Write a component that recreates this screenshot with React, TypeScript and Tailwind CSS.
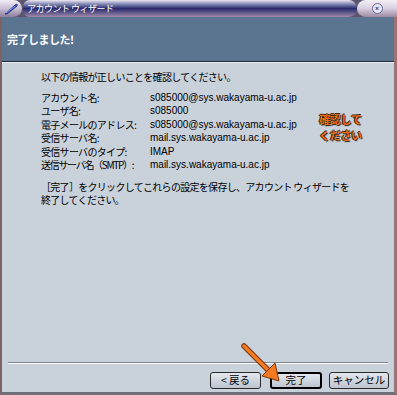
import React from "react";

const rows: [string, string][] = [
  ["アカウント名:", "s085000@sys.wakayama-u.ac.jp"],
  ["ユーザ名:", "s085000"],
  ["電子メールのアドレス:", "s085000@sys.wakayama-u.ac.jp"],
  ["受信サーバ名:", "mail.sys.wakayama-u.ac.jp"],
  ["受信サーバのタイプ:", "IMAP"],
  ["送信サーバ名（SMTP）:", "mail.sys.wakayama-u.ac.jp"],
];

const jp = "font-['Noto_Sans_CJK_JP',sans-serif]";
const latin = "font-['Liberation_Sans','Noto_Sans_CJK_JP',sans-serif]";

function TitleBar() {
  return (
    <div className="relative h-[17px] flex bg-[#5d5670]">
      {/* app icon */}
      <div className="w-[22px] h-[17px] rounded-r-full bg-gradient-to-b from-[#f2eef6] via-[#c9bfd6] to-[#8e7f9c] flex items-center justify-center">
        <svg width="16" height="12" viewBox="0 0 16 12">
          <path d="M2 11 L12 2 Q15 0 14 3 L4 11 Z" fill="#3b4fb8" stroke="#1c2470" strokeWidth="0.8" />
          <path d="M3 10 L12 3" stroke="#9fb0ff" strokeWidth="0.8" />
        </svg>
      </div>
      {/* bar */}
      <div className="flex-1 ml-[1px] rounded-l-[8px] rounded-r-[10px] bg-gradient-to-b from-[#ece8f2] via-[#2a2a6e] to-[#a28aa8] flex items-center pl-[4px]">
        <span className={`${jp} text-[9px] leading-none text-white tracking-[-0.5px] whitespace-pre`}>アカウント ウィザード</span>
      </div>
      {/* close */}
      <div className="w-[40px] h-[17px] rounded-l-full bg-gradient-to-b from-[#f4f0f6] via-[#d8cfe0] to-[#9d8aa2] flex items-center justify-center">
        <div className="w-[11px] h-[11px] rounded-full bg-[#e8e6f4] border border-[#6a6890] flex items-center justify-center text-[7px] leading-none text-[#303070] font-bold">
          ×
        </div>
      </div>
    </div>
  );
}

function Button({ label, primary, w }: { label: string; primary?: boolean; w: string }) {
  return (
    <div
      className={`${w} h-[17px] rounded-[3px] flex items-center justify-center bg-gradient-to-b from-[#e4e8ee] to-[#bcc4cf] ${jp} text-[10.5px] leading-none text-black ${
        primary ? "border-2 border-black" : "border border-[#2a2a2a]"
      }`}
    >
      {label}
    </div>
  );
}

export default function App() {
  return (
    <div className="relative w-[397px] h-[395px] flex flex-col bg-[#c9d1db] overflow-hidden">
      <TitleBar />
      <div className="flex-1 flex flex-col border-l-2 border-r-[3px] border-b-[3px] border-l-[#7d6363] border-r-[#9a7474] border-b-[#6f6f78]">
        {/* Header */}
        <div className="h-[45px] bg-[#5b7591] border-b border-[#1f2b3a] flex items-center pl-[5px]">
          <span className={`${jp} text-[11px] font-bold text-white tracking-[-0.5px]`}>完了しました!</span>
        </div>
        <div className="h-px bg-[#e6ecf2]" />

        {/* Content */}
        <div className={`pl-[39px] pt-[7px] ${jp} text-[10px] leading-[13.5px] text-black tracking-[-0.7px]`}>
          <p>以下の情報が正しいことを確認してください。</p>
          <div className="relative mt-[7px]">
            {rows.map(([label, value]) => (
              <div key={label} className="flex h-[13.5px] items-center">
                <span className={`w-[109px] shrink-0 whitespace-nowrap ${label.includes("SMTP") ? "tracking-[-1.3px]" : ""}`}>
                  {label}
                </span>
                <span className={`${latin} tracking-normal text-[10px]`}>{value}</span>
              </div>
            ))}
            <div
              className={`absolute left-[278px] top-[20px] flex flex-col items-center ${jp} text-[11px] leading-[16px] font-bold text-[#f06a10] tracking-[-0.3px] [text-shadow:1px_1px_1px_#1a1a1a,-1px_0_0_#3a2a20,0_-1px_0_#3a2a20]`}
            >
              <span>確認して</span>
              <span>ください</span>
            </div>
          </div>
          <p className="mt-[8px] whitespace-pre">
            {"［完了］をクリックしてこれらの設定を保存し、アカウント ウィザードを\n終了してください。"}
          </p>
        </div>

        <div className="flex-1" />

        {/* Separator */}
        <div className="mx-[6px] border-t border-[#7c838d]" />
        <div className="mx-[6px] border-t border-white" />

        {/* Buttons */}
        <div className="mt-[8px] mb-[3px] flex justify-end pr-[5px]">
          <Button label="< 戻る" w="w-[51px]" />
          <div className="w-[9px]" />
          <Button label="完了" primary w="w-[52px]" />
          <div className="w-[7px]" />
          <Button label="キャンセル" w="w-[60px]" />
        </div>
      </div>

      {/* Arrow annotation */}
      <svg className="absolute left-0 top-0 pointer-events-none" width="397" height="395">
        <line x1="244" y1="346" x2="268" y2="370" stroke="#7a3608" strokeWidth="5.5" strokeLinecap="round" />
        <line x1="244" y1="346" x2="268" y2="370" stroke="#f27a22" strokeWidth="3.5" strokeLinecap="round" />
        <polygon points="279,381 262,376 275,363" fill="#f27a22" stroke="#7a3608" strokeWidth="1" />
      </svg>
    </div>
  );
}
